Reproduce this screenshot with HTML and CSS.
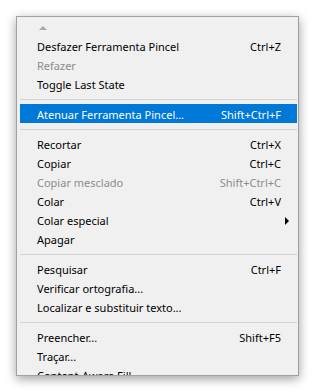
FILE: index.html
```html
<!DOCTYPE html>
<html>
<head>
<meta charset="utf-8">
<link rel="stylesheet" href="styles.css">
</head>
<body>
<div class="menu">
  <div class="scroll-up"><span class="tri-up"></span></div>
  <div class="item"><span class="label">Desfazer Ferramenta Pincel</span><span class="key">Ctrl+Z</span></div>
  <div class="item disabled"><span class="label">Refazer</span></div>
  <div class="item"><span class="label">Toggle Last State</span></div>
  <div class="sep"></div>
  <div class="item active"><span class="label">Atenuar Ferramenta Pincel...</span><span class="key">Shift+Ctrl+F</span></div>
  <div class="sep"></div>
  <div class="item"><span class="label">Recortar</span><span class="key">Ctrl+X</span></div>
  <div class="item"><span class="label">Copiar</span><span class="key">Ctrl+C</span></div>
  <div class="item disabled"><span class="label">Copiar mesclado</span><span class="key">Shift+Ctrl+C</span></div>
  <div class="item"><span class="label">Colar</span><span class="key">Ctrl+V</span></div>
  <div class="item"><span class="label">Colar especial</span><span class="tri-right"></span></div>
  <div class="item"><span class="label">Apagar</span></div>
  <div class="sep"></div>
  <div class="item"><span class="label">Pesquisar</span><span class="key">Ctrl+F</span></div>
  <div class="item"><span class="label">Verificar ortografia...</span></div>
  <div class="item"><span class="label">Localizar e substituir texto...</span></div>
  <div class="sep"></div>
  <div class="item"><span class="label">Preencher...</span><span class="key">Shift+F5</span></div>
  <div class="item"><span class="label">Traçar...</span></div>
  <div class="item"><span class="label">Content-Aware Fill</span></div>
</div>
</body>
</html>
```

FILE: styles.css
```css
html, body {
  margin: 0;
  padding: 0;
  background: #ffffff;
}
body {
  width: 316px;
  height: 392px;
  overflow: hidden;
  font-family: "Noto Sans", "Open Sans", sans-serif;
  font-size: 11px;
  color: #000;
}
.menu {
  margin: 16px 0 0 16px;
  width: 277px;
  height: 358px;
  border: 1px solid #a0a0a0;
  background: #f0f0f0;
  box-shadow: 0 3px 10px rgba(0, 0, 0, 0.38);
  padding: 0 1px 0 3px;
  overflow: hidden;
}
.scroll-up {
  height: 19px;
  display: flex;
  align-items: center;
  padding-left: 19px;
}
.tri-up {
  width: 0;
  height: 0;
  border-left: 4px solid transparent;
  border-right: 4px solid transparent;
  border-bottom: 4px solid #a8a8a8;
  margin-top: 2px;
}
.item {
  box-sizing: border-box;
  height: 19px;
  display: flex;
  align-items: center;
  justify-content: space-between;
  padding: 2px 16px 0 17px;
  line-height: 17px;
  white-space: nowrap;
}
.item.disabled {
  color: #8c8c8c;
}
.item.active {
  background: #0078d7;
  color: #ffffff;
}
.sep {
  height: 11px;
  display: flex;
  align-items: center;
}
.sep::before {
  content: "";
  display: block;
  width: 100%;
  height: 1px;
  background: #d4d4d4;
  margin-top: 1px;
}
.tri-right {
  width: 0;
  height: 0;
  border-top: 4px solid transparent;
  border-bottom: 4px solid transparent;
  border-left: 4px solid #000;
  margin-right: -8px;
}
```
